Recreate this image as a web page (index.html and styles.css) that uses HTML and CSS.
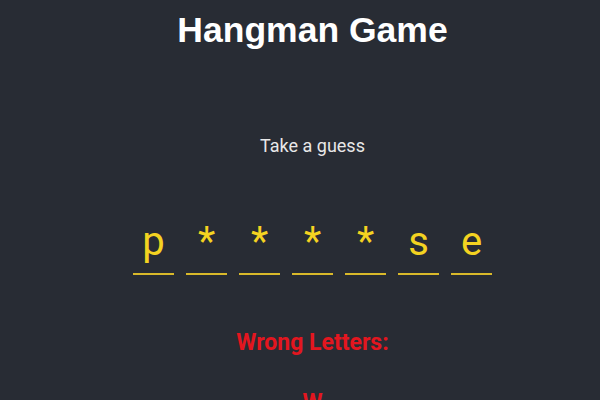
FILE: index.html
```html
<!DOCTYPE html>
<html>
<head>
<meta charset="utf-8">
<link rel="stylesheet" href="styles.css">
</head>
<body>
<div class="app">
  <h1 class="title">Hangman Game</h1>
  <p class="prompt">Take a guess</p>
  <div class="word">
    <span class="slot">p</span>
    <span class="slot">*</span>
    <span class="slot">*</span>
    <span class="slot">*</span>
    <span class="slot">*</span>
    <span class="slot">s</span>
    <span class="slot">e</span>
  </div>
  <h2 class="wrong-title">Wrong Letters:</h2>
  <div class="wrong-letters">W</div>
</div>
</body>
</html>
```

FILE: styles.css
```css
html, body {
  margin: 0;
  padding: 0;
  background: #282c34;
  height: 100%;
  overflow: hidden;
}
.app {
  display: flex;
  flex-direction: column;
  align-items: center;
  padding-left: 25px;
  font-family: Roboto, "Liberation Sans", sans-serif;
  color: #fff;
}
.title {
  font-family: "Liberation Sans", Arial, sans-serif;
  font-weight: bold;
  font-size: 35.5px;
  line-height: 40px;
  margin: 10px 0 0;
}
.prompt {
  font-size: 18px;
  line-height: 22px;
  margin: 85px 0 0;
  color: #e8e8e8;
}
.word {
  display: flex;
  gap: 12px;
  margin-top: 61px;
}
.slot {
  width: 41px;
  text-align: center;
  font-size: 40px;
  line-height: 48px;
  color: #f4d321;
  border-bottom: 2px solid #d9b92a;
  padding-bottom: 7px;
}
.wrong-title {
  font-size: 23px;
  line-height: 28px;
  font-weight: bold;
  color: #e3161f;
  margin: 54px 0 0;
}
.wrong-letters {
  font-size: 23px;
  line-height: 28px;
  font-weight: bold;
  color: #e3161f;
  margin-top: 32px;
}
```
